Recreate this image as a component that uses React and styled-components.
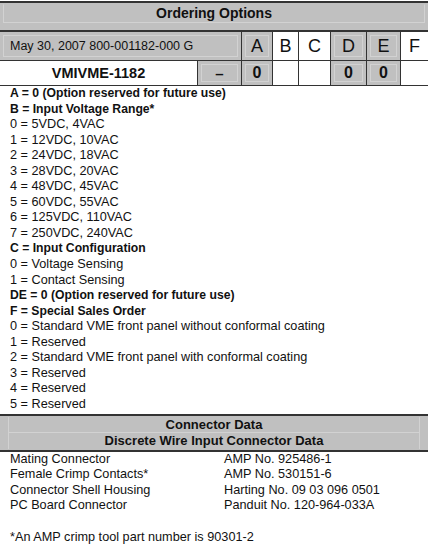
import React from "react";
import styled, { createGlobalStyle } from "styled-components";

const GlobalStyle = createGlobalStyle`
  body {
    margin: 0;
    background: #fff;
    color: #111;
    font-family: "Liberation Sans", Arial, sans-serif;
  }
`;

const GRAY = "#c0c0c0";
const LINE = "#333";
const LIGHT = "#d2d2d2";

const Page = styled.div`
  width: 428px;
  padding-top: 1px;
`;

const OrderTable = styled.div`
  border-top: 2px solid ${LINE};
`;

const Title = styled.div`
  background: ${GRAY};
  box-sizing: border-box;
  padding: 1px 3px 8px;
  border-bottom: 2px solid ${LINE};
  height: 29px;
`;

const TitleInner = styled.div`
  border: 1px solid ${LIGHT};
  border-top-color: transparent;
  line-height: 17px;
  text-align: center;
  font-weight: bold;
  font-size: 14px;
`;

const Grid = styled.div`
  display: grid;
  grid-template-columns: 197px 43px 30px 25px 31px 35px 33px 1fr;
  grid-template-rows: 28px 24px;
  gap: 1px;
  background: ${LINE};
  border-bottom: 1px solid ${LINE};
`;

const Cell = styled.div`
  grid-column: ${(p) => (p.$span ? `span ${p.$span}` : "auto")};
  background: ${(p) => (p.$gray ? GRAY : "#fff")};
  outline: ${(p) => (p.$gray ? `1px solid ${LIGHT}` : "none")};
  outline-offset: -4px;
  display: flex;
  align-items: center;
  justify-content: ${(p) => (p.$left ? "flex-start" : "center")};
  padding-left: ${(p) => (p.$left ? "10px" : "0")};
  font-size: ${(p) => p.$size || "14px"};
  font-weight: ${(p) => (p.$bold ? "bold" : "normal")};
`;

const List = styled.div`
  padding: 0 10px;
  line-height: 15.55px;
`;

const Line = styled.div`
  font-size: ${(p) => (p.$bold ? "12.2px" : "12.7px")};
  font-weight: ${(p) => (p.$bold ? "bold" : "normal")};
  white-space: nowrap;
`;

const ConnHeader = styled.div`
  margin-top: 1.5px;
  background: ${GRAY};
  border-top: 2px solid ${LINE};
  border-bottom: 2px solid ${LINE};
  padding: 1px 0 1px;
`;

const ConnHeaderRow = styled.div`
  margin: 0 8px;
  border-left: 1px solid ${LIGHT};
  border-right: 1px solid ${LIGHT};
  border-bottom: ${(p) => (p.$divider ? `1px solid ${LIGHT}` : "none")};
  line-height: ${(p) => (p.$divider ? "15px" : "16px")};
  text-align: center;
  font-weight: bold;
  font-size: 13px;
`;

const ConnRows = styled.div`
  display: grid;
  grid-template-columns: 214px 1fr;
  padding-left: 10px;
  line-height: 15.3px;
  font-size: 12.7px;
`;

const Footnote = styled.div`
  margin-top: 16.5px;
  padding-left: 10px;
  line-height: 15.3px;
  font-size: 12.7px;
`;

const letters = [
  { l: "A", gray: true },
  { l: "B" },
  { l: "C" },
  { l: "D", gray: true },
  { l: "E", gray: true },
  { l: "F" },
];

const codes = [
  { v: "0", gray: true },
  { v: "" },
  { v: "" },
  { v: "0", gray: true },
  { v: "0", gray: true },
  { v: "" },
];

const options = [
  ["A = 0 (Option reserved for future use)", true],
  ["B = Input Voltage Range*", true],
  ["0 = 5VDC, 4VAC"],
  ["1 = 12VDC, 10VAC"],
  ["2 = 24VDC, 18VAC"],
  ["3 = 28VDC, 20VAC"],
  ["4 = 48VDC, 45VAC"],
  ["5 = 60VDC, 55VAC"],
  ["6 = 125VDC, 110VAC"],
  ["7 = 250VDC, 240VAC"],
  ["C = Input Configuration", true],
  ["0 = Voltage Sensing"],
  ["1 = Contact Sensing"],
  ["DE = 0 (Option reserved for future use)", true],
  ["F = Special Sales Order", true],
  ["0 = Standard VME front panel without conformal coating"],
  ["1 = Reserved"],
  ["2 = Standard VME front panel with conformal coating"],
  ["3 = Reserved"],
  ["4 = Reserved"],
  ["5 = Reserved"],
];

const connectors = [
  ["Mating Connector", "AMP No. 925486-1"],
  ["Female Crimp Contacts*", "AMP No. 530151-6"],
  ["Connector Shell Housing", "Harting No. 09 03 096 0501"],
  ["PC Board Connector", "Panduit No. 120-964-033A"],
];

export default function App() {
  return (
    <Page>
      <GlobalStyle />
      <OrderTable>
        <Title>
          <TitleInner>Ordering Options</TitleInner>
        </Title>
        <Grid>
          <Cell $gray $span={2} $left $size="12.5px">
            May 30, 2007 800-001182-000 G
          </Cell>
          {letters.map((c) => (
            <Cell key={c.l} $gray={c.gray} $size="18px">
              {c.l}
            </Cell>
          ))}
          <Cell $bold $size="14.5px">
            VMIVME-1182
          </Cell>
          <Cell $gray $bold $size="15px">
            –
          </Cell>
          {codes.map((c, i) => (
            <Cell key={i} $gray={c.gray} $bold $size="16px">
              {c.v}
            </Cell>
          ))}
        </Grid>
      </OrderTable>

      <List>
        {options.map(([text, bold], i) => (
          <Line key={i} $bold={bold}>
            {text}
          </Line>
        ))}
      </List>

      <ConnHeader>
        <ConnHeaderRow $divider>Connector Data</ConnHeaderRow>
        <ConnHeaderRow>Discrete Wire Input Connector Data</ConnHeaderRow>
      </ConnHeader>
      <ConnRows>
        {connectors.map(([name, part]) => (
          <React.Fragment key={name}>
            <div>{name}</div>
            <div>{part}</div>
          </React.Fragment>
        ))}
      </ConnRows>
      <Footnote>*An AMP crimp tool part number is 90301-2</Footnote>
    </Page>
  );
}
